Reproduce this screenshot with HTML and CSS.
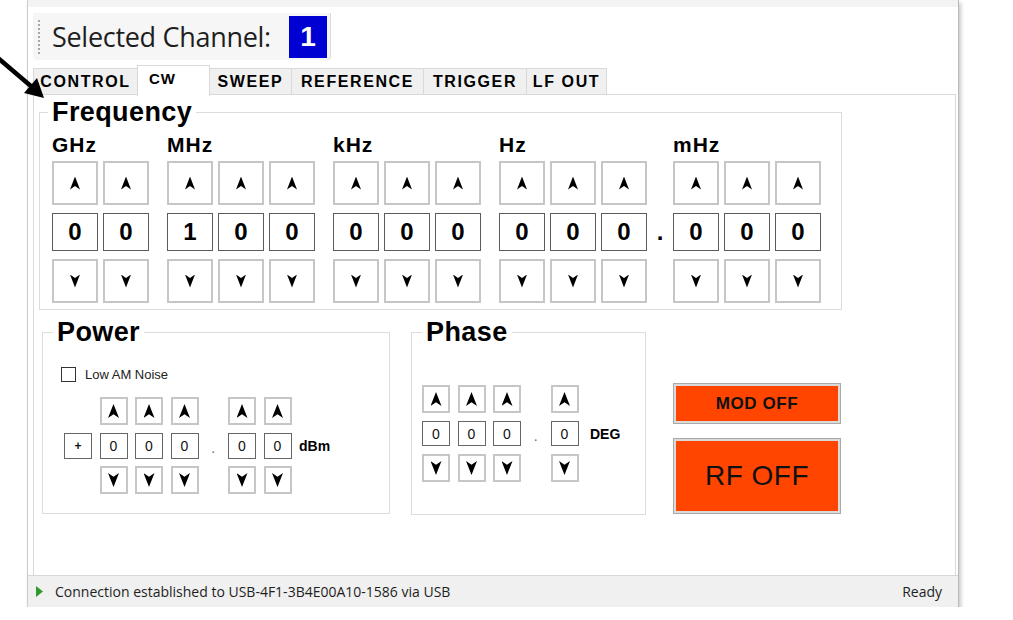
FILE: index.html
```html
<!DOCTYPE html>
<html lang="en">

<head>
    <meta charset="UTF-8">
    <title>Signal Generator - CW</title>
    <link rel="stylesheet" href="styles.css">
</head>

<body>
    <!-- callout arrow pointing at the tab strip -->
    <svg class="pointer" width="60" height="110" viewBox="0 0 60 110">
        <line x1="-2" y1="58" x2="32" y2="87" stroke="#000" stroke-width="4.5" />
        <polygon points="44,98 24,93 37,78" fill="#000" />
    </svg>

    <div class="window">
        <div class="menu-strip"></div>

        <div class="toolstrip">
            <span class="grip"></span>
            <span class="chan-label">Selected Channel:</span>
            <span class="chan-num">1</span>
        </div>

        <div class="tabs">
            <div class="tab t-control">CONTROL</div>
            <div class="tab t-cw active">CW</div>
            <div class="tab t-sweep">SWEEP</div>
            <div class="tab t-ref">REFERENCE</div>
            <div class="tab t-trig">TRIGGER</div>
            <div class="tab t-lf">LF OUT</div>
        </div>

        <div class="panel">
            <fieldset class="group freq">
                <legend>Frequency</legend>
                <div class="freq-row">
                    <div class="unit-group">
                        <div class="unit">GHz</div>
                        <div class="cells">
                            <span class="sb up"></span><span class="dg">0</span><span class="sb dn"></span>
                            <span class="sb up"></span><span class="dg">0</span><span class="sb dn"></span>
                        </div>
                    </div>
                    <div class="unit-group">
                        <div class="unit">MHz</div>
                        <div class="cells">
                            <span class="sb up"></span><span class="dg">1</span><span class="sb dn"></span>
                            <span class="sb up"></span><span class="dg">0</span><span class="sb dn"></span>
                            <span class="sb up"></span><span class="dg">0</span><span class="sb dn"></span>
                        </div>
                    </div>
                    <div class="unit-group">
                        <div class="unit">kHz</div>
                        <div class="cells">
                            <span class="sb up"></span><span class="dg">0</span><span class="sb dn"></span>
                            <span class="sb up"></span><span class="dg">0</span><span class="sb dn"></span>
                            <span class="sb up"></span><span class="dg">0</span><span class="sb dn"></span>
                        </div>
                    </div>
                    <div class="unit-group hz">
                        <div class="unit">Hz</div>
                        <div class="cells">
                            <span class="sb up"></span><span class="dg">0</span><span class="sb dn"></span>
                            <span class="sb up"></span><span class="dg">0</span><span class="sb dn"></span>
                            <span class="sb up"></span><span class="dg">0</span><span class="sb dn"></span>
                        </div>
                    </div>
                    <div class="unit-group sep">
                        <div class="unit">&nbsp;</div>
                        <div class="cells">
                            <span></span><span class="point">.</span><span></span>
                        </div>
                    </div>
                    <div class="unit-group">
                        <div class="unit">mHz</div>
                        <div class="cells">
                            <span class="sb up"></span><span class="dg">0</span><span class="sb dn"></span>
                            <span class="sb up"></span><span class="dg">0</span><span class="sb dn"></span>
                            <span class="sb up"></span><span class="dg">0</span><span class="sb dn"></span>
                        </div>
                    </div>
                </div>
            </fieldset>

            <div class="lower">
                <fieldset class="group power">
                    <legend>Power</legend>
                    <div class="power-body">
                        <label class="check"><span class="box"></span>Low AM Noise</label>
                        <div class="spin power-spin">
                            <span></span><span class="sd sign">+</span><span></span>
                            <span class="sb sm up"></span><span class="sd">0</span><span class="sb sm dn"></span>
                            <span class="sb sm up"></span><span class="sd">0</span><span class="sb sm dn"></span>
                            <span class="sb sm up"></span><span class="sd">0</span><span class="sb sm dn"></span>
                            <span></span><span class="spoint">.</span><span></span>
                            <span class="sb sm up"></span><span class="sd">0</span><span class="sb sm dn"></span>
                            <span class="sb sm up"></span><span class="sd">0</span><span class="sb sm dn"></span>
                            <span></span><span class="sunit">dBm</span><span></span>
                        </div>
                    </div>
                </fieldset>

                <fieldset class="group phase">
                    <legend>Phase</legend>
                    <div class="phase-body">
                        <div class="spin phase-spin">
                            <span class="sb sm up"></span><span class="sd">0</span><span class="sb sm dn"></span>
                            <span class="sb sm up"></span><span class="sd">0</span><span class="sb sm dn"></span>
                            <span class="sb sm up"></span><span class="sd">0</span><span class="sb sm dn"></span>
                            <span></span><span class="spoint">.</span><span></span>
                            <span class="sb sm up"></span><span class="sd">0</span><span class="sb sm dn"></span>
                            <span></span><span class="sunit deg">DEG</span><span></span>
                        </div>
                    </div>
                </fieldset>

                <div class="out-buttons">
                    <button class="out mod">MOD OFF</button>
                    <button class="out rf">RF OFF</button>
                </div>
            </div>
        </div>

        <div class="statusbar">
            <span class="ok-led"></span>
            <span class="status-text">Connection established to USB-4F1-3B4E00A10-1586 via USB</span>
            <span class="status-right">Ready</span>
        </div>
    </div>
</body>

</html>
```

FILE: styles.css
```css
body {
    margin: 0;
    background: #fff;
    font-family: "Liberation Sans", Arial, sans-serif;
    color: #000;
}

.pointer {
    position: absolute;
    left: 0;
    top: 0;
    z-index: 5;
}

.window {
    box-sizing: border-box;
    width: 932px;
    height: 607px;
    margin-left: 27px;
    border-left: 1px solid #cdcdcd;
    border-right: 1px solid #b9b9b9;
    box-shadow: 2px 3px 4px rgba(0, 0, 0, 0.22);
    display: flex;
    flex-direction: column;
    background: #fff;
}

.menu-strip {
    height: 7px;
    background: #f3f3f3;
}

/* channel toolstrip */
.toolstrip {
    box-sizing: border-box;
    width: 298px;
    height: 47px;
    margin: 6px 0 0 5px;
    display: flex;
    align-items: center;
    background: #f6f6f6;
    border-right: 1px solid #dadada;
    border-radius: 0 0 4px 4px;
}

.grip {
    width: 2px;
    height: 34px;
    margin-left: 5px;
    background: repeating-linear-gradient(to bottom, #a8a8a8 0 2px, transparent 2px 4px);
}

.chan-label {
    margin-left: 12px;
    font-family: "Open Sans", sans-serif;
    font-size: 27px;
    color: #1e1e1e;
    letter-spacing: -0.3px;
}

.chan-num {
    width: 38px;
    height: 42px;
    margin-left: auto;
    margin-right: 3px;
    background: #0000d2;
    color: #fff;
    font-weight: bold;
    font-size: 28px;
    display: flex;
    align-items: center;
    justify-content: center;
}

/* tab strip */
.tabs {
    display: flex;
    align-items: flex-end;
    height: 29px;
    margin: 5px 0 0 5px;
}

.tab {
    box-sizing: border-box;
    height: 26px;
    border: 1px solid #d9d9d9;
    border-bottom: 0;
    margin-left: -1px;
    background: #f0f0f0;
    font-weight: bold;
    font-size: 16px;
    letter-spacing: 1.6px;
    display: flex;
    align-items: center;
    justify-content: center;
}

.tab:first-child {
    margin-left: 0;
}

.tab.active {
    position: relative;
    z-index: 1;
    height: 31px;
    margin-bottom: -2px;
    align-items: flex-start;
    justify-content: flex-start;
    padding: 4px 0 0 11px;
    background: #fff;
    font-size: 15px;
    letter-spacing: 1px;
}

.t-control { width: 105px; }
.t-cw { width: 73px; }
.t-sweep { width: 83px; }
.t-ref { width: 133px; }
.t-trig { width: 104px; }
.t-lf { width: 81px; }

.panel {
    flex: 1;
    margin: 0 2px 0 5px;
    border: 1px solid #d9d9d9;
    border-bottom: 0;
    background: #fff;
}

/* group boxes */
.group {
    margin: 0;
    padding: 0;
    border: 1px solid #dcdcdc;
    min-width: 0;
}

.group legend {
    padding: 0 4px;
    font-weight: bold;
    font-size: 27px;
    line-height: 27px;
    letter-spacing: 0.4px;
}

.freq {
    box-sizing: border-box;
    width: 803px;
    margin: 4px 0 0 5px;
}

.freq legend {
    margin-left: 8px;
}

.freq-row {
    display: flex;
    padding: 8px 0 6px 12px;
}

.unit-group {
    margin-right: 18px;
}

.unit-group.hz {
    margin-right: 0;
}

.unit {
    font-weight: bold;
    font-size: 21px;
    line-height: 21px;
    letter-spacing: 1px;
    margin-bottom: 6px;
}

.cells {
    display: grid;
    grid-auto-flow: column;
    grid-template-rows: 44px 38px 44px;
    grid-auto-columns: 46px;
    column-gap: 5px;
    row-gap: 8px;
}

.sep {
    margin-right: 0;
}

.sep .cells {
    grid-auto-columns: 26px;
}

.point {
    font-weight: bold;
    font-size: 24px;
    display: flex;
    align-items: center;
    justify-content: center;
}

/* spin buttons with dart arrows */
.sb {
    box-sizing: border-box;
    border: 2px solid #c6c6c6;
    background: #fff;
    display: flex;
    align-items: center;
    justify-content: center;
}

.sb::before {
    content: "";
    width: 10px;
    height: 13px;
    background: #000;
}

.sb.up::before {
    clip-path: polygon(50% 0, 100% 100%, 50% 74%, 0 100%);
}

.sb.dn::before {
    clip-path: polygon(0 0, 50% 26%, 100% 0, 50% 100%);
}

.sb.sm::before {
    width: 11px;
    height: 14px;
}

.dg {
    box-sizing: border-box;
    border: 1px solid #5c5c5c;
    font-weight: bold;
    font-size: 24px;
    display: flex;
    align-items: center;
    justify-content: center;
}

/* power / phase */
.lower {
    display: flex;
    align-items: flex-start;
    margin: 9px 0 0 8px;
}

.power {
    box-sizing: border-box;
    width: 348px;
}

.power legend,
.phase legend {
    margin-left: 10px;
}

.power-body {
    padding: 21px 0 19px 21px;
}

.check {
    display: flex;
    align-items: center;
    gap: 9px;
    margin-left: -3px;
    margin-bottom: 15px;
    font-size: 13px;
    color: #222;
}

.check .box {
    box-sizing: border-box;
    width: 15px;
    height: 15px;
    border: 1px solid #333;
    background: #fff;
}

.spin {
    display: grid;
    grid-auto-flow: column;
    column-gap: 7.5px;
}

.power-spin {
    grid-template-rows: 28px 26px 28px;
    grid-template-columns: 28px 28px 28px 28px 14.5px 28px 28px auto;
    row-gap: 7.5px;
}

.phase {
    box-sizing: border-box;
    width: 235px;
    margin-left: 21px;
}

.phase-body {
    padding: 39px 0 32px 10px;
}

.phase-spin {
    grid-template-rows: 28px 25px 28px;
    grid-template-columns: 28px 28px 28px 14.5px 28px auto;
    row-gap: 8px;
}

.sd {
    box-sizing: border-box;
    border: 1px solid #666;
    font-size: 14px;
    color: #111;
    display: flex;
    align-items: center;
    justify-content: center;
}

.sd.sign {
    font-size: 12px;
    font-weight: bold;
}

.spoint {
    font-size: 14px;
    color: #666;
    display: flex;
    align-items: center;
    justify-content: center;
    padding-top: 4px;
}

.sunit {
    font-weight: bold;
    font-size: 14px;
    display: flex;
    align-items: center;
}

.sunit.deg {
    margin-left: 4px;
}

.out-buttons {
    display: flex;
    flex-direction: column;
    gap: 14px;
    margin: 64px 0 0 27px;
}

.out {
    box-sizing: border-box;
    width: 168px;
    border: 1px solid #a9a9a9;
    box-shadow: inset 0 0 0 2px #dadada;
    background: #ff4500;
    color: #111;
    font-family: "Liberation Sans", Arial, sans-serif;
    padding: 0;
    cursor: pointer;
}

.out.mod {
    height: 41px;
    font-weight: bold;
    font-size: 17px;
    letter-spacing: 0.6px;
}

.out.rf {
    height: 76px;
    font-size: 28px;
    letter-spacing: 0.5px;
}

/* status bar */
.statusbar {
    box-sizing: border-box;
    height: 32px;
    display: flex;
    align-items: center;
    padding: 0 16px 0 8px;
    background: #f0f0f0;
    border-top: 1px solid #d7d7d7;
    font-family: "Open Sans", sans-serif;
    font-size: 14px;
    color: #1e1e1e;
}

.ok-led {
    width: 7px;
    height: 11px;
    margin-right: 12px;
    background: #2e9a2e;
    clip-path: polygon(0 0, 100% 50%, 0 100%);
}

.status-right {
    margin-left: auto;
}
```
